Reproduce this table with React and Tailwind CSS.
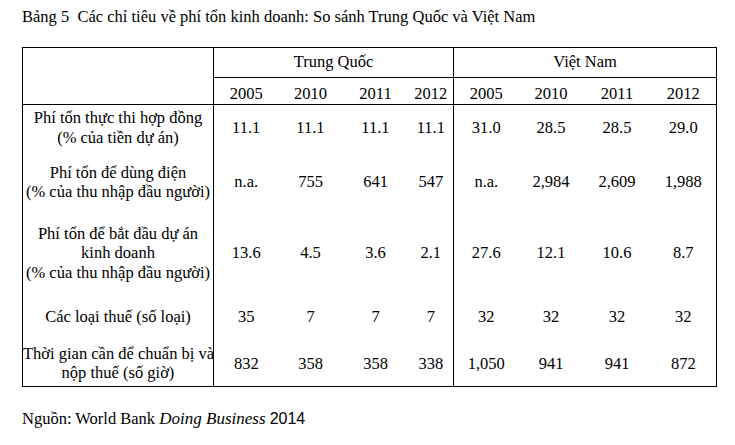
import React from "react";

const tq = ["2005", "2010", "2011", "2012"];
const rows = [
  { h: "h-[47px]", label: ["Phí tổn thực thi hợp đồng", "(% của tiền dự án)"], v: ["11.1", "11.1", "11.1", "11.1", "31.0", "28.5", "28.5", "29.0"] },
  { h: "h-[62px]", label: ["Phí tổn để dùng điện", "(% của thu nhập đầu người)"], v: ["n.a.", "755", "641", "547", "n.a.", "2,984", "2,609", "1,988"] },
  { h: "h-[80px]", label: ["Phí tổn để bắt đầu dự án", "kinh doanh", "(% của thu nhập đầu người)"], v: ["13.6", "4.5", "3.6", "2.1", "27.6", "12.1", "10.6", "8.7"] },
  { h: "h-[48px]", label: ["Các loại thuế (số loại)"], v: ["35", "7", "7", "7", "32", "32", "32", "32"] },
  { h: "h-[45px]", label: ["Thời gian cần để chuẩn bị và", "nộp thuế (số giờ)"], v: ["832", "358", "358", "338", "1,050", "941", "941", "872"] },
];

export default function App() {
  return (
    <div className="w-[735px] h-[445px] bg-white text-black overflow-hidden font-[family-name:'Liberation_Serif',serif] text-[16.5px] leading-[19.5px]">
      <div className="pl-[22px] pt-[7px] whitespace-pre">Bảng 5  Các chỉ tiêu về phí tổn kinh doanh: So sánh Trung Quốc và Việt Nam</div>
      <div className="pl-[22px] pt-[20px]">
        <table className="table-fixed border-collapse w-[694px]">
          <colgroup>
            <col className="w-[191px]" />
            <col className="w-[65px]" />
            <col className="w-[64px]" />
            <col className="w-[66px]" />
            <col className="w-[45px]" />
            <col className="w-[65px]" />
            <col className="w-[65px]" />
            <col className="w-[67px]" />
            <col className="w-[66px]" />
          </colgroup>
          <thead>
            <tr className="h-[30px]">
              <th rowSpan={2} className="border border-black p-0 font-normal"></th>
              <th colSpan={4} className="border border-black p-0 font-normal text-center align-middle">Trung Quốc</th>
              <th colSpan={4} className="border border-black p-0 font-normal text-center align-middle">Việt Nam</th>
            </tr>
            <tr className="h-[27px]">
              {tq.map((y, i) => (
                <th key={"a" + i} className={`border-y border-black p-0 pt-[6px] font-normal text-center align-middle ${i === 0 ? "border-l" : ""}`}>{y}</th>
              ))}
              {tq.map((y, i) => (
                <th key={"b" + i} className={`border-y border-black p-0 pt-[6px] font-normal text-center align-middle ${i === 0 ? "border-l" : ""} ${i === 3 ? "border-r" : ""}`}>{y}</th>
              ))}
            </tr>
          </thead>
          <tbody>
            {rows.map((r, ri) => (
              <tr key={ri} className={r.h}>
                <td className={`border-l border-r border-black p-0 text-center align-middle ${ri === rows.length - 1 ? "border-b" : ""}`}>
                  {r.label.map((l, li) => (
                    <div key={li} className="whitespace-nowrap">{l}</div>
                  ))}
                </td>
                {r.v.map((v, vi) => (
                  <td
                    key={vi}
                    className={`border-black p-0 text-center align-middle ${vi === 4 ? "border-l" : ""} ${vi === 7 ? "border-r" : ""} ${ri === rows.length - 1 ? "border-b" : ""}`}
                  >
                    {v}
                  </td>
                ))}
              </tr>
            ))}
          </tbody>
        </table>
      </div>
      <div className="pl-[22px] pt-[22px] whitespace-pre">
        Nguồn: World Bank <span className="italic text-[17px]">Doing Business</span>{" "}
        <span className="font-[family-name:'Liberation_Sans',sans-serif] text-[16px]">2014</span>
      </div>
    </div>
  );
}
